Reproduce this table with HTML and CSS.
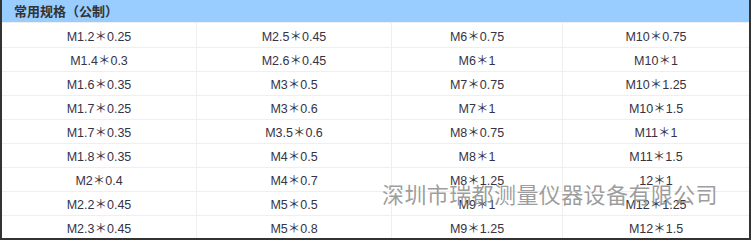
FILE: index.html
```html
<!DOCTYPE html>
<html>
<head>
<meta charset="utf-8">
<link rel="stylesheet" href="styles.css">
</head>
<body>
<div class="wrap">
  <div class="grid">
    <div class="head">常用规格（公制）</div>
    <div class="c">M1.2＊0.25</div><div class="c">M2.5＊0.45</div><div class="c">M6＊0.75</div><div class="c">M10＊0.75</div>
    <div class="c">M1.4＊0.3</div><div class="c">M2.6＊0.45</div><div class="c">M6＊1</div><div class="c">M10＊1</div>
    <div class="c">M1.6＊0.35</div><div class="c">M3＊0.5</div><div class="c">M7＊0.75</div><div class="c">M10＊1.25</div>
    <div class="c">M1.7＊0.25</div><div class="c">M3＊0.6</div><div class="c">M7＊1</div><div class="c">M10＊1.5</div>
    <div class="c">M1.7＊0.35</div><div class="c">M3.5＊0.6</div><div class="c">M8＊0.75</div><div class="c">M11＊1</div>
    <div class="c">M1.8＊0.35</div><div class="c">M4＊0.5</div><div class="c">M8＊1</div><div class="c">M11＊1.5</div>
    <div class="c">M2＊0.4</div><div class="c">M4＊0.7</div><div class="c">M8＊1.25</div><div class="c">12＊1</div>
    <div class="c">M2.2＊0.45</div><div class="c">M5＊0.5</div><div class="c">M9＊1</div><div class="c">M12＊1.25</div>
    <div class="c">M2.3＊0.45</div><div class="c">M5＊0.8</div><div class="c">M9＊1.25</div><div class="c">M12＊1.5</div>
  </div>
  <div class="mark">深圳市瑞都测量仪器设备有限公司</div>
</div>
</body>
</html>
```
FILE: styles.css
```css
html, body { margin: 0; padding: 0; background: #fff; }
.wrap {
  position: relative;
  width: 751px;
  height: 240px;
  box-sizing: border-box;
  border: 2px solid #333;
  border-top: none;
  overflow: hidden;
}
.grid {
  display: grid;
  grid-template-columns: 194px 194px 170px 1fr;
  grid-template-rows: 22px 24px repeat(7, 23px) 22px;
  gap: 1px;
  background: #efefef;
  height: 238px;
}
.head {
  grid-column: 1 / -1;
  background: #99ccff;
  color: #333;
  font-family: "Noto Sans CJK SC", sans-serif;
  font-weight: bold;
  font-size: 13px;
  line-height: 22px;
  padding-left: 12px;
}
.c {
  background: #fff;
  color: #353345;
  font-family: "Liberation Sans", "Noto Sans CJK SC", sans-serif;
  font-size: 12.5px;
  display: flex;
  align-items: center;
  justify-content: center;
}
.mark {
  position: absolute;
  left: 380px;
  top: 179px;
  font-family: "Noto Sans CJK SC", sans-serif;
  font-size: 22px;
  line-height: 28px;
  color: rgba(140, 140, 140, 0.85);
  letter-spacing: 0.4px;
  white-space: nowrap;
}
```
